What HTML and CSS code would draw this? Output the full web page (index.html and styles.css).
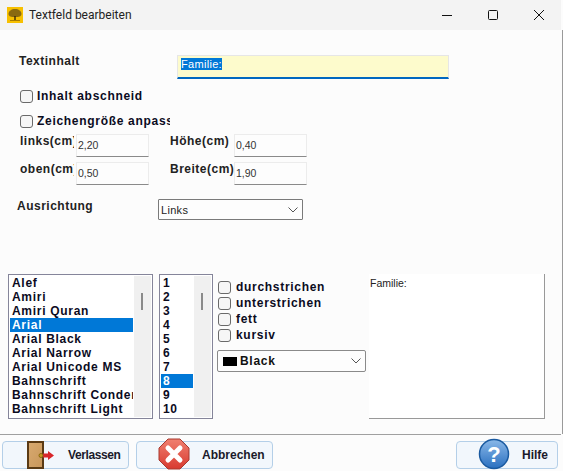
FILE: index.html
```
<!DOCTYPE html>
<html>
  <head>
    <meta charset="utf-8">
    <title>Textfeld bearbeiten</title>
    <link rel="stylesheet" href="styles.css">
  </head>
  <body>
    <div class="window">
      <div class="titlebar">
        <svg class="app-icon" width="16" height="16" viewBox="0 0 16 16">
          <rect width="16" height="16" fill="#f7c000"/>
          <path d="M1.500 7c0-3 3-5 6.500-5s6.500 2 6.500 5c0 2-2 3-4 3h-5c-2 0-4-1-4-3z" fill="#8a6a10"/>
          <path d="M7.300 9h1.400v4H7.300z" fill="#3a2c08"/>
          <path d="M3 13h10v1H3z" fill="#a87c00"/>
        </svg>
        <span class="title">Textfeld bearbeiten</span>
        <div class="win-buttons">
          <svg width="12" height="12" viewBox="0 0 12 12"><path d="M1 6.500h10" stroke="#111" fill="none"/></svg>
          <svg width="12" height="12" viewBox="0 0 12 12"><rect x="1.500" y="1.500" width="9" height="9" rx="1" stroke="#111" fill="none"/></svg>
          <svg width="12" height="12" viewBox="0 0 12 12"><path d="M1 1l10 10M11 1L1 11" stroke="#111" fill="none"/></svg>
        </div>
      </div>

      <div class="content">
        <div class="row-text">
          <span class="label label-text">Textinhalt</span>
          <div class="text-input"><span class="selected-text">Familie:</span></div>
        </div>

        <label class="check check-clip1"><span class="box"></span><span class="clip">Inhalt abschneiden</span></label>
        <label class="check check-clip2"><span class="box"></span><span class="clip">Zeichengröße anpassen</span></label>

        <div class="size-grid">
          <span class="label clip label-left">links(cm)</span>
          <div class="num-input">2,20</div>
          <span class="label clip label-right">Höhe(cm)</span>
          <div class="num-input">0,40</div>
          <span class="label clip label-left">oben(cm)</span>
          <div class="num-input">0,50</div>
          <span class="label clip label-right">Breite(cm)</span>
          <div class="num-input">1,90</div>
        </div>

        <div class="row-align">
          <span class="label align-label">Ausrichtung</span>
          <div class="select align-select">
            <span class="select-value">Links</span>
            <svg width="10" height="6" viewBox="0 0 10 6"><path d="M.5.5L5 5 9.500.5" stroke="#555" fill="none"/></svg>
          </div>
        </div>

        <div class="row-font">
          <div class="listbox font-list">
            <ul>
              <li>Alef</li>
              <li>Amiri</li>
              <li>Amiri Quran</li>
              <li class="active">Arial</li>
              <li>Arial Black</li>
              <li>Arial Narrow</li>
              <li>Arial Unicode MS</li>
              <li>Bahnschrift</li>
              <li>Bahnschrift Condensed</li>
              <li>Bahnschrift Light</li>
            </ul>
            <div class="scroll"><div class="thumb"></div></div>
          </div>
          <div class="listbox size-list">
            <ul>
              <li>1</li>
              <li>2</li>
              <li>3</li>
              <li>4</li>
              <li>5</li>
              <li>6</li>
              <li>7</li>
              <li class="active">8</li>
              <li>9</li>
              <li>10</li>
            </ul>
            <div class="scroll"><div class="thumb"></div></div>
          </div>
          <div class="style-col">
            <label class="check-small"><span class="box"></span>durchstrichen</label>
            <label class="check-small"><span class="box"></span>unterstrichen</label>
            <label class="check-small"><span class="box"></span>fett</label>
            <label class="check-small"><span class="box"></span>kursiv</label>
            <div class="select color-select">
              <span class="swatch"></span>
              <span class="select-value">Black</span>
              <svg width="10" height="6" viewBox="0 0 10 6"><path d="M.5.5L5 5 9.500.5" stroke="#555" fill="none"/></svg>
            </div>
          </div>
          <div class="preview">Familie:</div>
        </div>
      </div>

      <div class="footer">
        <button class="btn btn-leave">
          <svg class="btn-icon" width="28" height="32" viewBox="0 0 28 32">
            <defs>
              <linearGradient id="door" x1="0" x2="1" y1="0" y2="1">
                <stop offset="0" stop-color="#d8aa70"/>
                <stop offset="1" stop-color="#c8965a"/>
              </linearGradient>
            </defs>
            <rect x="1" y="4" width="15" height="26" fill="url(#door)" stroke="#5a3a14" stroke-width="2"/>
            <path d="M16 15.500h5V13l6 4.500-6 4.500v-2.500h-5z" fill="#d8262a"/>
            <circle cx="14" cy="17.500" r="2" fill="#c89a20" stroke="#8a6a10"/>
          </svg>
          <span>Verlassen</span>
        </button>
        <button class="btn btn-cancel">
          <svg class="btn-icon" width="32" height="32" viewBox="0 0 32 32">
            <defs>
              <linearGradient id="stop" x1="0" x2="0" y1="0" y2="1">
                <stop offset="0" stop-color="#f08070"/>
                <stop offset="1" stop-color="#d83a30"/>
              </linearGradient>
            </defs>
            <path d="M10 1h12l9 9v12l-9 9H10l-9-9V10z" fill="url(#stop)" stroke="#a83a30"/>
            <path d="M10 10l12 12M22 10L10 22" stroke="#fff" stroke-width="5" stroke-linecap="round"/>
          </svg>
          <span>Abbrechen</span>
        </button>
        <button class="btn btn-help">
          <svg class="btn-icon" width="32" height="32" viewBox="0 0 32 32">
            <defs>
              <linearGradient id="help" x1="0" x2="0" y1="0" y2="1">
                <stop offset="0" stop-color="#8ab8e8"/>
                <stop offset="1" stop-color="#2a70c0"/>
              </linearGradient>
            </defs>
            <circle cx="16" cy="16" r="14.500" fill="url(#help)" stroke="#1a5aa0" stroke-width="1.500"/>
            <text x="16" y="24" text-anchor="middle" class="help-mark">?</text>
          </svg>
          <span>Hilfe</span>
        </button>
      </div>
    </div>
  </body>
</html>
```

FILE: styles.css
```
html, body {
  margin: 0;
  height: 100%;
  overflow: hidden;
  background: #fff;
}

body {
  font-family: "Liberation Sans", Arial, sans-serif;
  color: #111;
}

.window {
  width: 563px;
  height: 471px;
  display: flex;
  flex-direction: column;
  background: #fcfcfc;
}

/* title bar */
.titlebar {
  height: 30px;
  flex: none;
  display: flex;
  align-items: center;
  margin-right: 2px;
  padding-left: 7px;
  background: #f3f3f3;
}

.title {
  margin-left: 6px;
  font-family: Roboto, sans-serif;
  font-size: 12px;
  color: #222;
}

.win-buttons {
  margin-left: auto;
  display: flex;
  gap: 34px;
  padding-right: 16px;
}

/* form */
.content {
  flex: 1;
  padding-top: 25px;
  border-right: 1px solid #9a9a9a;
}

.label {
  font-size: 12px;
  font-weight: bold;
  letter-spacing: 0.5px;
  color: #222;
}

.clip {
  overflow: hidden;
  white-space: nowrap;
}

.row-text {
  display: flex;
  height: 23px;
}

.label-text {
  width: 158px;
  padding-left: 19px;
  line-height: 12px;
}

.text-input {
  width: 267px;
  height: 19px;
  padding: 2px 0 0 3px;
  background: #fdfbcc;
  border: 1px solid #e6e6e6;
  border-bottom: 2px solid #0067c0;
  font-size: 11px;
  line-height: 13px;
  letter-spacing: 0.3px;
}

.selected-text {
  background: #0078d7;
  color: #fff;
}

.check {
  display: flex;
  align-items: center;
  padding-left: 20px;
  height: 14px;
  font-size: 12px;
  font-weight: bold;
  letter-spacing: 0.7px;
  color: #0b0b1e;
}

.check-clip1 {
  margin-top: 11px;
  width: 122px;
}

.check-clip2 {
  margin-top: 11px;
  width: 150px;
}

.box {
  flex: none;
  width: 11px;
  height: 11px;
  margin-right: 4px;
  background: #f6f6f6;
  border: 1px solid #6a6a6a;
  border-radius: 3px;
}

.size-grid {
  display: grid;
  grid-template-columns: 56px 73px 85px 73px;
  grid-template-rows: 22px 22px;
  row-gap: 6px;
  width: 287px;
  margin: 6px 0 0 20px;
}

.size-grid .label {
  line-height: 14px;
}

.label-left {
  margin-right: 2px;
}

.label-right {
  padding-left: 21px;
}

.num-input {
  box-sizing: border-box;
  height: 23px;
  padding: 4px 0 0 1px;
  background: #fdfdfd;
  border: 1px solid #ececec;
  border-bottom: 1px solid #8a8a8a;
  font-size: 10.5px;
  line-height: 13px;
  color: #333;
}

.row-align {
  display: flex;
  height: 21px;
  margin-top: 15px;
}

.align-label {
  width: 141px;
  padding-left: 17px;
  line-height: 14px;
}

.select {
  box-sizing: border-box;
  display: flex;
  align-items: center;
  background: #fdfdfd;
  border: 1px solid #7a7a7a;
}

.select svg {
  margin-left: auto;
  margin-right: 4px;
}

.align-select {
  width: 145px;
  height: 21px;
  padding-left: 2px;
  border-radius: 1px;
  font-size: 11px;
  letter-spacing: 0.3px;
  color: #222;
}

/* font row */
.row-font {
  display: flex;
  height: 145px;
  margin: 54px 0 0 8px;
}

.listbox {
  box-sizing: border-box;
  display: flex;
  height: 145px;
  padding: 1px;
  background: #fff;
  border: 1px solid #85859a;
}

.listbox ul {
  flex: 1;
  min-width: 0;
  margin: 0;
  padding: 0;
  list-style: none;
}

.listbox li {
  height: 14px;
  padding-left: 2px;
  font-size: 12px;
  font-weight: bold;
  line-height: 14px;
  letter-spacing: 0.7px;
  white-space: nowrap;
  overflow: hidden;
  color: #0b0b1e;
}

.listbox li.active {
  background: #0078d7;
  color: #fff;
}

.scroll {
  flex: none;
  width: 17px;
  margin-left: 1px;
  background: #f0f0f0;
}

.thumb {
  width: 2px;
  height: 17px;
  margin: 17px 0 0 7px;
  background: #8a8a8a;
}

.font-list {
  width: 145px;
}

.size-list {
  width: 54px;
  margin-left: 6px;
}

.style-col {
  width: 149px;
  margin-left: 4px;
  padding-top: 5px;
}

.check-small {
  display: flex;
  align-items: center;
  height: 16px;
  padding-left: 1px;
  font-size: 12px;
  font-weight: bold;
  letter-spacing: 0.7px;
  color: #0b0b1e;
}

.check-small .box {
  margin-right: 5px;
}

.color-select {
  width: 149px;
  height: 22px;
  margin-top: 7px;
  padding-left: 5px;
  border-radius: 2px;
  border-color: #8a8a8a;
  font-size: 12px;
  font-weight: bold;
  letter-spacing: 0.7px;
}

.swatch {
  width: 14px;
  height: 9px;
  margin-right: 3px;
  background: #000;
}

.preview {
  box-sizing: border-box;
  width: 176px;
  height: 145px;
  margin-left: 3px;
  padding: 3px 0 0 1px;
  background: #fff;
  border-right: 1px solid #999;
  border-bottom: 1px solid #999;
  font-size: 10.5px;
  line-height: 12px;
  color: #222;
}

/* bottom buttons */
.footer {
  flex: none;
  height: 28px;
  display: flex;
  margin-right: 2px;
  padding: 6px 3px 2px 2px;
  border-top: 1px solid #a0a0a0;
}

.btn {
  position: relative;
  height: 28px;
  padding: 0;
  background: #f2f7fc;
  border: 1px solid #b4cfe8;
  border-radius: 4px;
  font-family: "Liberation Sans", Arial, sans-serif;
  font-size: 12px;
  font-weight: bold;
  color: #1a1a2a;
}

.btn span {
  position: absolute;
  top: 6px;
  left: 65px;
}

.btn-icon {
  position: absolute;
  top: -4px;
  left: 21px;
}

.btn-leave {
  width: 127px;
  letter-spacing: -0.4px;
}

.btn-leave .btn-icon {
  left: 24px;
}

.btn-cancel {
  width: 137px;
  margin-left: 7px;
}

.btn-help {
  width: 102px;
  margin-left: auto;
}

.help-mark {
  font-family: "Liberation Sans", Arial, sans-serif;
  font-size: 22px;
  font-weight: bold;
  fill: #fff;
}
```
